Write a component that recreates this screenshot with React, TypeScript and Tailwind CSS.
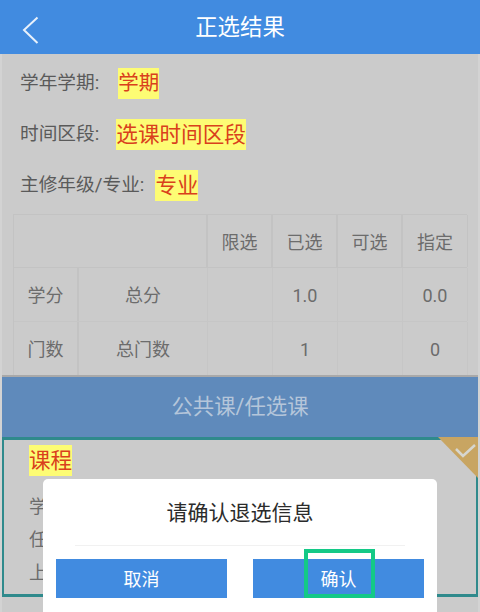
const FONT = "font-['Roboto','Noto_Sans_CJK_SC',sans-serif]";

function Highlight({ children, className = "text-[21.5px]" }: { children: string; className?: string }) {
  return (
    <span className={`bg-[#fdfc74] text-[#d9401c] leading-[31px] h-[31px] inline-block ${className}`}>
      {children}
    </span>
  );
}

function InfoRow({ label, value, valueClass }: { label: string; value: string; valueClass: string }) {
  return (
    <div className="flex items-center h-[31px]">
      <span className="text-[18.7px] text-[#5a5a5a] leading-none">{label}</span>
      <Highlight className={valueClass}>{value}</Highlight>
    </div>
  );
}

function Cell({ children, className = "" }: { children?: string; className?: string }) {
  return (
    <div className={`flex items-center justify-center pt-[2px] text-[18px] text-[#6c6c6c] ${className}`}>{children}</div>
  );
}

export default function App() {
  return (
    <div className={`${FONT} relative w-[480px] h-[612px] overflow-hidden bg-[#cbcbcb]`}>
      <header className="relative h-[54px] bg-[#418be0] flex items-center justify-center">
        <svg className="absolute left-[22px] top-[16px]" width="18" height="28" viewBox="0 0 18 28" fill="none">
          <path d="M15.5 1.5 L2 14 L15.5 27" stroke="#e8f1fb" strokeWidth="2" />
        </svg>
        <h1 className="text-[22.4px] text-white leading-none">正选结果</h1>
      </header>

      <div className="h-[558px] border-x-2 border-[#d3d3d3]">
        <div className="pl-[18px] pt-[14px] flex flex-col gap-[20px]">
          <InfoRow label="学年学期:" value="学期" valueClass="ml-[19px] text-[20.5px]" />
          <InfoRow label="时间区段:" value="选课时间区段" valueClass="ml-[17px] text-[21.6px]" />
          <InfoRow label="主修年级/专业:" value="专业" valueClass="ml-[11px] text-[21.5px]" />
        </div>

        <div className="ml-[11px] mt-[13px] w-[454px] border-l border-[#c3c3c3]">
          <div className="grid grid-cols-[194px_65px_65px_65px_65px] h-[54px] border-y border-[#c3c3c3]">
            <Cell className="border-r-2 border-[#c3c3c3]" />
            <Cell className="border-r-2 border-[#c3c3c3]">限选</Cell>
            <Cell className="border-r-2 border-[#c3c3c3]">已选</Cell>
            <Cell className="border-r-2 border-[#c3c3c3]">可选</Cell>
            <Cell className="border-r border-[#c3c3c3]">指定</Cell>
          </div>
          <div className="grid grid-cols-[65px_129px_65px_65px_65px_65px] h-[54px] border-b border-[#c6c6c6]">
            <Cell className="border-r-2 border-[#c3c3c3]">学分</Cell>
            <Cell className="border-r border-[#c6c6c6]">总分</Cell>
            <Cell className="border-r border-[#c6c6c6]" />
            <Cell className="border-r border-[#c6c6c6]">1.0</Cell>
            <Cell className="border-r border-[#c6c6c6]" />
            <Cell className="border-r border-[#c6c6c6]">0.0</Cell>
          </div>
          <div className="grid grid-cols-[65px_129px_65px_65px_65px_65px] h-[53px]">
            <Cell className="border-r-2 border-[#c3c3c3]">门数</Cell>
            <Cell className="border-r border-[#c6c6c6]">总门数</Cell>
            <Cell className="border-r border-[#c6c6c6]" />
            <Cell className="border-r border-[#c6c6c6]">1</Cell>
            <Cell className="border-r border-[#c6c6c6]" />
            <Cell className="border-r border-[#c6c6c6]">0</Cell>
          </div>
        </div>

        <div className="border-t-2 border-[#a9a9a9]">
          <div className="h-[60px] bg-[#5f8abb] flex items-center justify-center text-[21.4px] text-[#b5c6da]">
            公共课/任选课
          </div>
          <div className="relative h-[160px] border-x-2 border-y-[3px] border-[#2f8a8c] bg-[#cbcbcb] pl-[25px] pt-[5px]">
            <Highlight>课程</Highlight>
            <div className="mt-[15px] flex flex-col text-[18.5px] leading-[33px] text-[#6c6c6c]">
              <span>学</span>
              <span>任</span>
              <span>上</span>
            </div>
            <svg className="absolute right-[-2px] top-[-3px]" width="40" height="41" viewBox="0 0 40 41">
              <path d="M0 0 H40 V41 Z" fill="#c8a562" />
              <path d="M18 12 L25 19 L37 8" stroke="#d6d6d0" strokeWidth="2.5" fill="none" />
            </svg>
          </div>
        </div>
      </div>

      <div className="absolute left-[43px] top-[479px] w-[394px] h-[133px] bg-white rounded-t-[5px] px-[13px]">
        <p className="text-[21px] leading-none text-[#2b2b2b] text-center pt-[24px]">请确认退选信息</p>
        <div className="mx-[19px] mt-[21px] border-t border-[#f1f1f1]" />
        <div className="mt-[13px] flex justify-between">
          <button className="w-[171px] h-[39px] pt-[2px] bg-[#418be0] text-white text-[18px]">取消</button>
          <button className="w-[171px] h-[39px] pt-[2px] bg-[#418be0] text-white text-[18px]">确认</button>
        </div>
        <div className="absolute left-[261px] top-[70px] w-[71px] h-[49px] border-[4px] border-[#14c987]" />
      </div>
    </div>
  );
}
